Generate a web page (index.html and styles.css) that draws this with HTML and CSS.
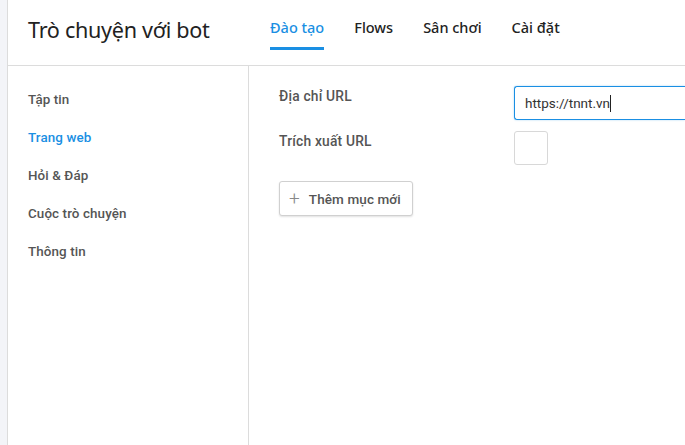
FILE: index.html
```html
<!DOCTYPE html>
<html lang="vi">
<head>
<meta charset="utf-8">
<link rel="stylesheet" href="styles.css">
</head>
<body>
<div class="app">
  <div class="rail"></div>
  <div class="main">
    <header class="header">
      <h1 class="title">Trò chuyện với bot</h1>
      <nav class="tabs">
        <a class="tab active">Đào tạo</a>
        <a class="tab">Flows</a>
        <a class="tab">Sân chơi</a>
        <a class="tab">Cài đặt</a>
      </nav>
    </header>
    <div class="body">
      <aside class="sidebar">
        <a class="side-item">Tập tin</a>
        <a class="side-item active">Trang web</a>
        <a class="side-item">Hỏi &amp; Đáp</a>
        <a class="side-item">Cuộc trò chuyện</a>
        <a class="side-item">Thông tin</a>
      </aside>
      <section class="content">
        <div class="row">
          <label class="label">Địa chỉ URL</label>
          <div class="input"><span>https://tnnt.vn</span><span class="caret"></span></div>
        </div>
        <div class="row row-check">
          <label class="label">Trích xuất URL</label>
          <div class="checkbox"></div>
        </div>
        <button class="add-btn"><span class="plus">+</span>Thêm mục mới</button>
      </section>
    </div>
  </div>
</div>
</body>
</html>
```
FILE: styles.css
```css
html, body { margin: 0; padding: 0; background: #fff; }
body { width: 685px; height: 445px; overflow: hidden; font-family: Roboto, "Noto Sans", sans-serif; }
.app { display: flex; height: 445px; }
.rail { width: 7px; background: #f3f4f8; border-right: 1px solid #dcdcdc; flex: none; }
.main { flex: 1; display: flex; flex-direction: column; min-width: 0; }
.header { height: 65px; border-bottom: 1px solid #dcdcdc; display: flex; align-items: stretch; flex: none; }
.title { margin: 0 0 0 20px; width: 242px; font-family: "Noto Sans", sans-serif; font-weight: 400; font-size: 21.6px; color: #222; line-height: 60px; letter-spacing: -0.3px; }
.tabs { display: flex; gap: 30px; }
.tab { font-family: "Noto Sans", sans-serif; font-size: 14.5px; font-weight: 500; color: #222; border-bottom: 3px solid transparent; height: 47px; box-sizing: border-box; line-height: 55px; }
.tab.active { color: #1a8fe3; border-bottom-color: #1a8fe3; height: 50px; }
.body { flex: 1; display: flex; }
.sidebar { width: 220px; border-right: 1px solid #dcdcdc; padding: 24px 0 0 20px; display: flex; flex-direction: column; flex: none; }
.side-item { font-size: 13.4px; font-weight: 500; color: #555; height: 38px; line-height: 20px; letter-spacing: 0.1px; }
.side-item.active { color: #1a8fe3; }
.content { padding: 20px 0 0 30px; display: flex; flex-direction: column; flex: 1; min-width: 0; }
.row { display: flex; align-items: flex-start; }
.label { width: 235px; font-size: 13.8px; font-weight: 500; color: #555; padding-top: 2px; flex: none; letter-spacing: 0.2px; }
.input { flex: 1; height: 34px; box-sizing: border-box; border: 1px solid #1a8fe3; border-right: none; border-radius: 3px 0 0 3px; box-shadow: 0 0 2px rgba(26,143,227,.4); display: flex; align-items: center; padding-left: 10px; font-size: 13.5px; color: #333; }
.caret { display: inline-block; width: 1px; height: 17px; background: #222; }
.row-check { margin-top: 11px; }
.checkbox { width: 34px; height: 34px; box-sizing: border-box; border: 1px solid #d8d8d8; border-radius: 3px; }
.add-btn { margin-top: 16px; align-self: flex-start; width: 134px; height: 35px; border: 1px solid #d0d0d0; border-radius: 3px; background: #fff; box-shadow: 0 1px 2px rgba(0,0,0,.12); font-family: Roboto, sans-serif; font-size: 13.5px; font-weight: 500; color: #555; display: flex; align-items: center; padding: 0 0 0 9px; letter-spacing: 0.1px; }
.plus { font-size: 19px; font-weight: 300; color: #888; margin-right: 9px; line-height: 1; }
```
